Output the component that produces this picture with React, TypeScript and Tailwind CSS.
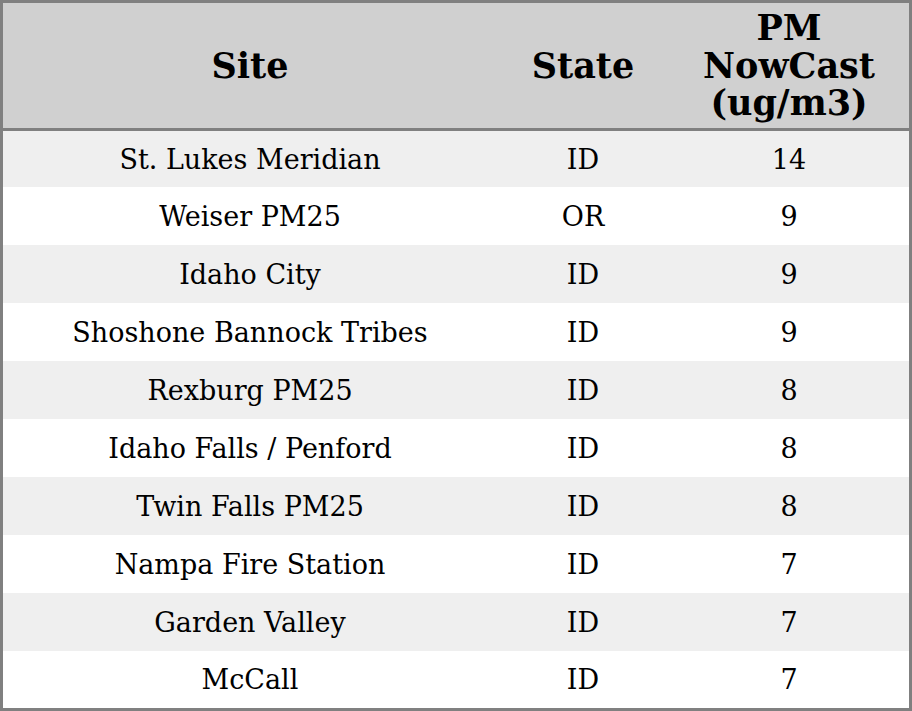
import React from "react";

const rows: [string, string, string][] = [
  ["St. Lukes Meridian", "ID", "14"],
  ["Weiser PM25", "OR", "9"],
  ["Idaho City", "ID", "9"],
  ["Shoshone Bannock Tribes", "ID", "9"],
  ["Rexburg PM25", "ID", "8"],
  ["Idaho Falls / Penford", "ID", "8"],
  ["Twin Falls PM25", "ID", "8"],
  ["Nampa Fire Station", "ID", "7"],
  ["Garden Valley", "ID", "7"],
  ["McCall", "ID", "7"],
];

export default function App() {
  return (
    <div
      className="w-[912px] h-[711px] border-[3px] border-[#808080] bg-white flex flex-col text-black"
      style={{ fontFamily: '"DejaVu Serif", serif' }}
    >
      <div className="h-[128px] shrink-0 grid grid-cols-[494px_172px_240px] items-center bg-[#d0d0d0] border-b-[3px] border-[#808080] font-bold text-[35px] leading-[37.5px] text-center">
        <div>Site</div>
        <div>State</div>
        <div>
          PM
          <br />
          NowCast
          <br />
          (ug/m3)
        </div>
      </div>
      <div className="flex-1 flex flex-col">
        {rows.map((r, i) => (
          <div
            key={r[0]}
            className={`grid grid-cols-[494px_172px_240px] items-center text-center text-[27px] pt-[2px] ${
              i === 0 ? "h-[56px]" : i === rows.length - 1 ? "h-[57px]" : "h-[58px]"
            } ${i % 2 === 0 ? "bg-[#efefef]" : "bg-white"}`}
          >
            <div>{r[0]}</div>
            <div>{r[1]}</div>
            <div>{r[2]}</div>
          </div>
        ))}
      </div>
    </div>
  );
}
